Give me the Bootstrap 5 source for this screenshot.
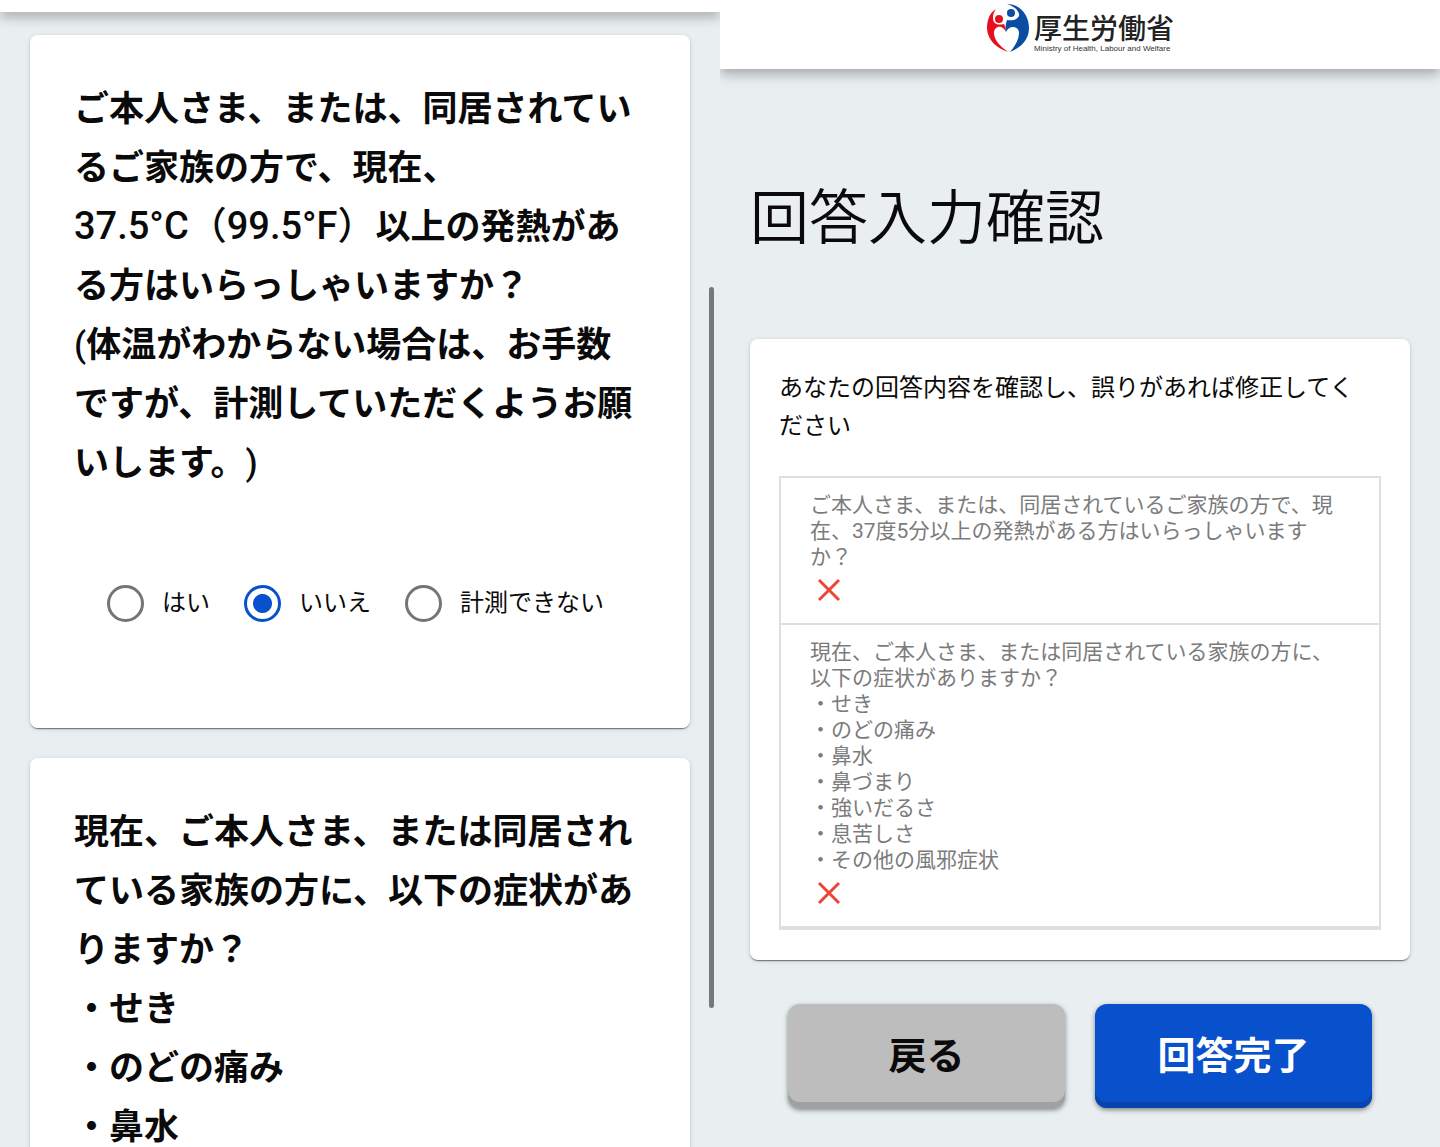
<!DOCTYPE html>
<html lang="ja">
<head>
<meta charset="utf-8">
<meta name="viewport" content="width=device-width, initial-scale=1">
<title>回答入力確認 | 厚生労働省</title>
<link href="https://cdn.jsdelivr.net/npm/bootstrap@5.3.0/dist/css/bootstrap.min.css" rel="stylesheet">
<style>
  body { background: #e9eef1; color: #0a0a0a; font-family: Roboto, "Noto Sans CJK JP", sans-serif; font-size: 24px; line-height: 38px; text-spacing-trim: space-all; }
  .screen { min-height: 100vh; overflow: hidden; background: #e9eef1; }
  .screen-form { height: 100vh; }
  .topbar { background: #fff; box-shadow: 0 4px 8px -2px rgba(0,0,0,.12), 0 8px 10px rgba(0,0,0,.1), 0 2px 18px rgba(0,0,0,.14); }
  .topbar-slim { height: 12px; }
  .topbar-logo { height: 69px; padding-bottom: 11px; }
  .panel { background: #fff; border: 0; border-radius: 8px; color: inherit; box-shadow: 0 2px 1px -1px rgba(0,0,0,.4), 0 1px 2px rgba(0,0,0,.16), 0 1px 5px rgba(0,0,0,.12); }
  .question { padding: 45px 44px; border: 0; }
  .question-text { font-size: 35px; line-height: 59px; font-weight: 700; margin: 0; white-space: nowrap; }
  .latin { font-size: 38px; line-height: 1; font-weight: 500; }
  .paren { font-weight: 500; }
  .questions { padding: 23px 30px 0; gap: 30px; }
  .answers { gap: 34px; padding: 91px 33px 61px; }
  .answers label { padding-left: 18px; }
  .answers .form-check-input { width: 37px; height: 37px; margin: 0; float: none; border: 3px solid #757575; background: #fff; box-shadow: none; }
  .answers .form-check-input:checked { border-color: #0850cc; background: radial-gradient(circle, #0850cc 9px, #fff 10px); }
  .scroll-thumb { top: 287px; right: 6px; width: 5px; height: 721px; border-radius: 3px; background: #76797c; }
  .brand-text { padding-top: 11px; }
  .brand-ja { font-size: 28px; line-height: 28px; font-weight: 500; color: #222; }
  .brand-en { font-family: "Liberation Sans", sans-serif; font-size: 8px; line-height: 10px; color: #333; }
  .page-title { font-size: 59px; line-height: 70px; font-weight: 350; margin: 0; padding: 115px 30px 85px; white-space: nowrap; }
  .review { margin: 0 30px; padding: 30px 29px; }
  .review-list { margin-top: 31px; border: 2px solid #dfdfdf; border-bottom-width: 4px; font-size: 21px; line-height: 26px; color: #7b7b7b; }
  .review-item { padding: 14px 29px; }
  .review-item + .review-item { border-top: 2px solid #dfdfdf; }
  .actions { padding: 44px 68px 38px; gap: 30px; }
  .action-btn { flex: 1 1 0; height: 104px; padding: 0 12px; border: 0; border-radius: 12px; font-size: 38px; font-weight: 700; }
  .action-back { background: #bdbdbd; color: #0a0a0a; box-shadow: inset 0 -6px 0 #9fa0a1, 0 2px 5px rgba(0,0,0,.45); }
  .action-done { background: #0850cc; color: #fff; box-shadow: inset 0 -6px 0 #0744ae, 0 2px 5px rgba(0,0,0,.45); }
  .action-back:hover { background: #b3b3b3; }
  .action-done:hover { background: #0a49b8; color: #fff; }
</style>
</head>
<body>
<div class="container-fluid p-0">
  <div class="row g-0">
    <section class="col-6 screen screen-form position-relative">
      <header class="topbar topbar-slim"></header>
      <form class="questions d-flex flex-column">
        <fieldset class="panel question">
          <p class="question-text" id="q1">ご本人さま、または、同居されてい<br>るご家族の方で、現在、<br><span class="latin">37.5°C（99.5°F）</span>以上の発熱があ<br>る方はいらっしゃいますか？<br><span class="paren">(</span>体温がわからない場合は、お手数<br>ですが、計測していただくようお願<br>いします。<span class="paren">)</span></p>
          <div class="answers d-flex" role="radiogroup" aria-labelledby="q1">
            <div class="d-flex align-items-center"><input class="form-check-input" type="radio" name="fever" id="fever-yes"><label for="fever-yes">はい</label></div>
            <div class="d-flex align-items-center"><input class="form-check-input" type="radio" name="fever" id="fever-no" checked><label for="fever-no">いいえ</label></div>
            <div class="d-flex align-items-center text-nowrap"><input class="form-check-input" type="radio" name="fever" id="fever-unknown"><label for="fever-unknown">計測できない</label></div>
          </div>
        </fieldset>
        <fieldset class="panel question">
          <p class="question-text">現在、ご本人さま、または同居され<br>ている家族の方に、以下の症状があ<br>りますか？<br>・せき<br>・のどの痛み<br>・鼻水</p>
        </fieldset>
      </form>
      <div class="scroll-thumb position-absolute"></div>
    </section>

    <section class="col-6 screen">
      <header class="topbar topbar-logo d-flex justify-content-center align-items-center">
        <svg class="me-1" width="44" height="50" viewBox="0 0 44 50" aria-hidden="true">
          <path fill="#e60f1e" d="M10 5C3 9 1 17 1 25c1 11 9 19 21 23C14 42 8 36 8 29c0-5 4-7 7-6 3 1 4 3 5 5 0-3-1-6-2-8-4 1-8 1-10-2C6 14 7 9 10 5z"/>
          <circle cx="13" cy="15" r="4" fill="#e60f1e"/>
          <path fill="#0b4da2" d="M21 0c13 0 22 11 22 24 0 11-7 19-19 24 4-5 9-12 9-19 0-4-3-6-6-6-3 0-6 2-7 5-1-5 0-9 1-12 5 1 10 0 12-4C34 7 28 2 21 0z"/>
          <circle cx="25" cy="9" r="4" fill="#0b4da2"/>
        </svg>
        <div class="brand-text d-flex flex-column">
          <span class="brand-ja">厚生労働省</span>
          <span class="brand-en">Ministry of Health, Labour and Welfare</span>
        </div>
      </header>
      <h1 class="page-title">回答入力確認</h1>
      <main class="panel review">
        <p class="m-0 text-nowrap">あなたの回答内容を確認し、誤りがあれば修正してく<br>ださい</p>
        <div class="review-list text-nowrap">
          <div class="review-item">
            ご本人さま、または、同居されているご家族の方で、現<br>在、37度5分以上の発熱がある方はいらっしゃいます<br>か？
            <svg class="d-block" width="38" height="39" viewBox="0 0 38 39" role="img" aria-label="いいえ"><path d="M9 10l20 20M29 10L9 30" stroke="#ee4438" stroke-width="3"/></svg>
          </div>
          <div class="review-item">
            現在、ご本人さま、または同居されている家族の方に、<br>以下の症状がありますか？<br>・せき<br>・のどの痛み<br>・鼻水<br>・鼻づまり<br>・強いだるさ<br>・息苦しさ<br>・その他の風邪症状
            <svg class="d-block" width="38" height="39" viewBox="0 0 38 39" role="img" aria-label="いいえ"><path d="M9 10l20 20M29 10L9 30" stroke="#ee4438" stroke-width="3"/></svg>
          </div>
        </div>
      </main>
      <div class="actions d-flex">
        <button type="button" class="btn action-btn action-back">戻る</button>
        <button type="button" class="btn action-btn action-done">回答完了</button>
      </div>
    </section>
  </div>
</div>
<script src="https://cdn.jsdelivr.net/npm/bootstrap@5.3.0/dist/js/bootstrap.bundle.min.js"></script>
</body>
</html>
